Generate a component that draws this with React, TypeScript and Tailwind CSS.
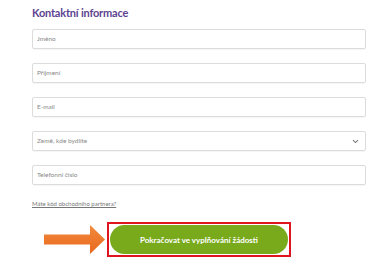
import React from 'react';

const fields = ['Jméno', 'Příjmení', 'E-mail'];

export default function App() {
  return (
    <div className="w-[390px] h-[269px] bg-white overflow-hidden font-['Lato',sans-serif]">
      <div className="pl-[32px] pr-[24px] pt-[5px]">
        <h2 className="text-[11px] leading-[15px] font-bold text-[#5d4391] tracking-[-0.2px]">Kontaktní informace</h2>

        {/* Form fields */}
        <div className="mt-[9px] flex flex-col gap-[14px]">
          {fields.map((f) => (
            <div
              key={f}
              className="h-[20px] w-[334px] border border-[#dcdcdc] rounded-[2px] shadow-[0_1px_1px_rgba(0,0,0,0.04)] flex items-center px-[4px] text-[6.5px] text-[#8a8a8a]"
            >
              {f}
            </div>
          ))}
          <div className="h-[20px] w-[334px] border border-[#dcdcdc] rounded-[2px] shadow-[0_1px_1px_rgba(0,0,0,0.04)] flex items-center justify-between px-[4px] text-[6.5px] text-[#8a8a8a]">
            <span>Země, kde bydlíte</span>
            <svg width="7" height="5" viewBox="0 0 7 5" className="mr-[2px]">
              <path d="M1 1.2 L3.5 3.6 L6 1.2" fill="none" stroke="#777" strokeWidth="1.1" />
            </svg>
          </div>
          <div className="h-[20px] w-[334px] border border-[#dcdcdc] rounded-[2px] shadow-[0_1px_1px_rgba(0,0,0,0.04)] flex items-center px-[4px] text-[6.5px] text-[#8a8a8a]">
            Telefonní číslo
          </div>
        </div>

        <div className="mt-[15px] text-[6px] leading-[8px] text-[#777] underline">Máte kód obchodního partnera?</div>

        {/* Submit with highlight */}
        <div className="mt-[14px] flex items-center ml-[12px]">
          <svg width="62" height="29" viewBox="0 0 62 29" className="shrink-0">
            <defs>
              <linearGradient id="ar" x1="0" y1="0" x2="0" y2="1">
                <stop offset="0" stopColor="#f28a3c" />
                <stop offset="1" stopColor="#e8681e" />
              </linearGradient>
            </defs>
            <path d="M0 9.5 H46 V0 L61 14.5 L46 29 V19.5 H0 Z" fill="url(#ar)" />
          </svg>
          <div className="ml-[1px] border-2 border-[#e0141e] p-[1px]">
            <button className="w-[178px] h-[29px] rounded-full bg-[#78aa1c] text-white text-[8px] font-bold flex items-center justify-center">
              Pokračovat ve vyplňování žádosti
            </button>
          </div>
        </div>
      </div>
    </div>
  );
}
